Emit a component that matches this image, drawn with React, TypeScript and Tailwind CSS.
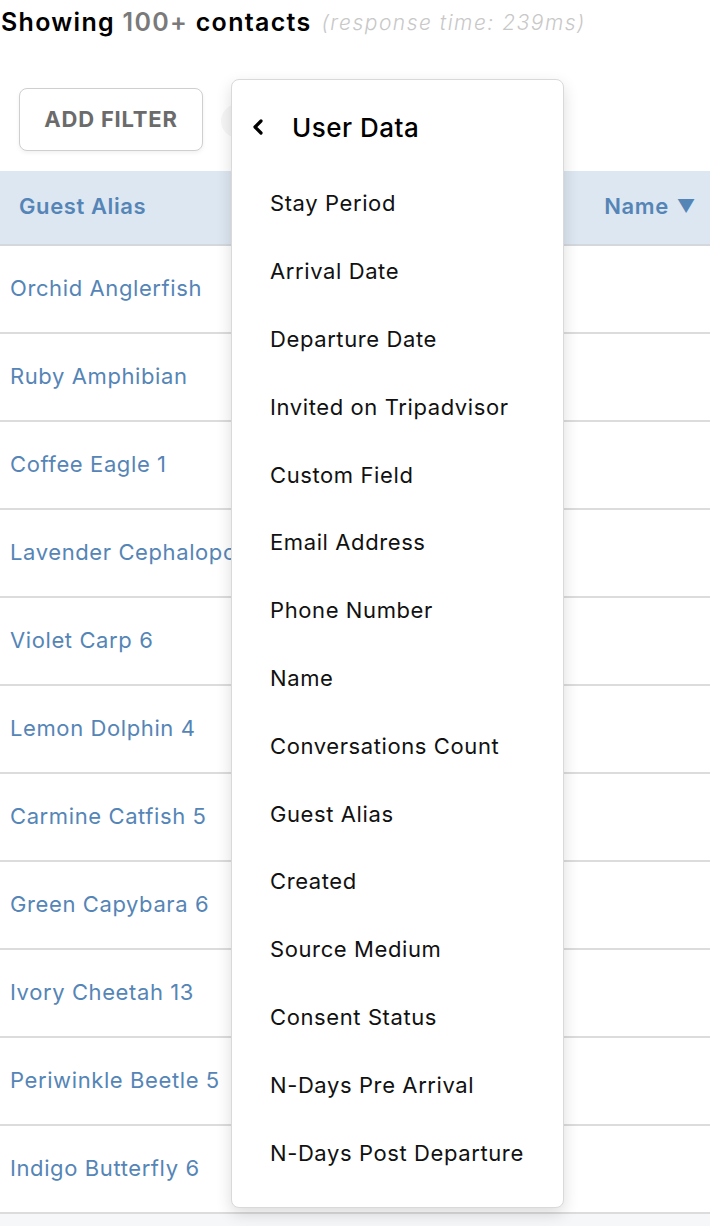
import { ChevronLeft } from 'lucide-react';

const guests = [
  'Orchid Anglerfish',
  'Ruby Amphibian',
  'Coffee Eagle 1',
  'Lavender Cephalopod 2',
  'Violet Carp 6',
  'Lemon Dolphin 4',
  'Carmine Catfish 5',
  'Green Capybara 6',
  'Ivory Cheetah 13',
  'Periwinkle Beetle 5',
  'Indigo Butterfly 6',
];

const fields = [
  'Stay Period',
  'Arrival Date',
  'Departure Date',
  'Invited on Tripadvisor',
  'Custom Field',
  'Email Address',
  'Phone Number',
  'Name',
  'Conversations Count',
  'Guest Alias',
  'Created',
  'Source Medium',
  'Consent Status',
  'N-Days Pre Arrival',
  'N-Days Post Departure',
];

export default function App() {
  return (
    <div className="relative h-[1226px] w-[710px] overflow-hidden bg-white font-['Inter',sans-serif]">
      <div className="flex h-[46px] items-center gap-[10px] pl-px text-[25px] tracking-[1.3px] text-black">
        <span className="font-semibold">
          Showing <span className="text-[#7a7a7a]">100+</span> contacts
        </span>
        <span className="text-[21px] font-light italic tracking-[1.5px] text-[#c8c8c8]">
          (response time: 239ms)
        </span>
      </div>

      <div className="flex h-[125px] items-start gap-[18px] pl-[19px] pt-[42px]">
        <button
          className="h-[63px] w-[184px] rounded-[8px] border border-[#cfcfcf] bg-white text-[22px] font-bold tracking-[0.8px] text-[#6b6b6b] shadow-[0_2px_4px_rgba(0,0,0,0.06)]"
          type="button"
        >
          ADD FILTER
        </button>
        <div className="mt-[16px] h-[34px] w-[120px] rounded-full bg-[#f6f6f6]" />
      </div>

      <div className="flex h-[75px] items-center justify-between border-b-2 border-[#d4d8dc] bg-[#dde7f1] pb-[3px] pl-[19px] pr-[14px] text-[22px] font-semibold tracking-[0.6px] text-[#5585b6]">
        <span>Guest Alias</span>
        <span className="flex items-center gap-[8px]">
          Name
          <span className="text-[18px]">▼</span>
        </span>
      </div>

      <div className="flex flex-col">
        {guests.map((g) => (
          <div
            className="flex h-[88px] items-center whitespace-nowrap border-b-2 border-[#dcdcdc] pb-[2px] pl-[10px] text-[22px] tracking-[0.6px] text-[#5585b6]"
            key={g}
          >
            {g}
          </div>
        ))}
        <div className="h-[40px] bg-[#f5f7f9]" />
      </div>

      <div className="absolute left-[231px] top-[79px] flex w-[333px] flex-col rounded-[8px] border border-[#d9d9d9] bg-white pb-[20px] shadow-[0_6px_16px_rgba(0,0,0,0.14)]">
        <div className="flex h-[90px] items-center gap-[22px] pl-[14px] pt-[4px] text-[26px] font-medium tracking-[0.5px] text-black">
          <ChevronLeft className="h-[24px] w-[24px]" strokeWidth={3.2} />
          <span>User Data</span>
        </div>
        {fields.map((f) => (
          <div
            className="flex h-[67.8px] items-center pl-[38px] text-[22px] tracking-[0.6px] text-[#111]"
            key={f}
          >
            {f}
          </div>
        ))}
      </div>
    </div>
  );
}
